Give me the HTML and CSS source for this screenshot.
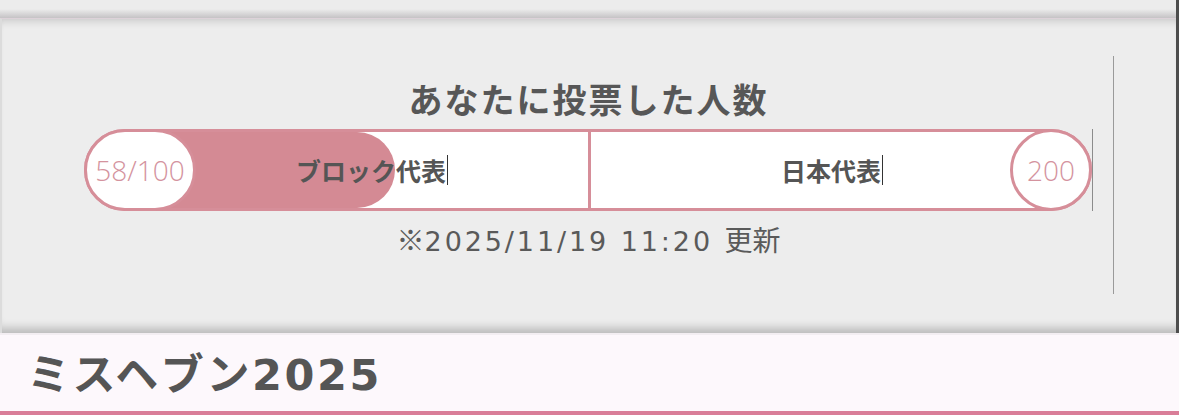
FILE: index.html
```html
<!DOCTYPE html>
<html lang="ja">
<head>
  <meta charset="UTF-8" />
  <meta name="viewport" content="width=device-width, initial-scale=1.0"/>
  <title>ミスヘブン2025</title>
  <link rel="stylesheet" href="styles.css">
</head>
<body>

<div class="page">
  <!-- Header strip above the vote panel -->
  <div class="topbar"></div>

  <!-- Vote count panel -->
  <section class="panel">
    <div class="vote-box">
      <h2 class="vote-title">あなたに投票した人数</h2>
      <div class="bar-row">
        <div class="vote-bar">
          <div class="seg seg-block">
            <div class="fill" style="width: 61.5%"></div>
            <div class="count-pill">58/100</div>
            <span class="seg-label">ブロック代表</span>
          </div>
          <div class="seg seg-japan">
            <span class="seg-label">日本代表</span>
            <div class="count-circle">200</div>
          </div>
        </div>
      </div>
      <p class="updated"><span class="note-mark">※</span>2025/11/19 11:20 <span class="note-jp">更新</span></p>
    </div>
  </section>
</div>

<!-- Section heading -->
<section class="heading-bar">
  <h1>ミスヘブン2025</h1>
</section>

</body>
</html>
```

FILE: styles.css
```css
* { margin: 0; padding: 0; box-sizing: border-box; }
body {
  font-family: "Noto Sans CJK JP", "Noto Sans", sans-serif;
  background: #ececec;
  color: #555;
  width: 1179px;
  height: 415px;
  overflow: hidden;
}

.page {
  border-right: 3px solid #4d4d4d;
}

.topbar {
  height: 18px;
  background: linear-gradient(#ececec 50%, #c5c3c5);
}

.panel {
  height: 315px;
  background: #ededed;
  border-top: 1px solid #ddd2d9;
  border-left: 2px solid #dcdcdc;
  padding: 37px 62px 0 62px;
  box-shadow: inset 0 9px 8px -7px rgba(0,0,0,0.16),
              inset 0 -12px 10px -7px rgba(0,0,0,0.22);
}

.vote-box {
  height: 238px;
  border-right: 1px solid #9a9a9a;
  padding: 22px 20px 0 20px;
  text-align: center;
}

.vote-title {
  font-size: 34px;
  font-weight: 700;
  line-height: 41px;
  letter-spacing: 2px;
  color: #575757;
}

.bar-row {
  margin-top: 10px;
  border-right: 1px solid #8c8c8c;
}

.vote-bar {
  display: flex;
  height: 82px;
  border: 3px solid #d68e99;
  border-radius: 41px;
  background: #fff;
}

.seg {
  position: relative;
  display: flex;
  align-items: center;
}

.seg-block {
  width: 504px;
  border-right: 3px solid #d68e99;
}

.seg-japan {
  flex: 1;
}

.fill {
  position: absolute;
  top: 0;
  bottom: 0;
  left: 0;
  background: #d48a94;
  border-radius: 38px;
}

.count-pill, .count-circle {
  position: relative;
  z-index: 1;
  display: flex;
  align-items: center;
  justify-content: center;
  background: #fff;
  border: 3px solid #d68e99;
  color: #d4939e;
  font-family: "Open Sans", "Noto Sans", sans-serif;
  font-size: 28px;
  font-weight: 300;
  align-self: stretch;
}

.count-pill {
  width: 112px;
  margin: -3px 0 -3px -3px;
  border-radius: 41px;
}

.count-circle {
  width: 82px;
  margin: -3px -3px -3px auto;
  border-radius: 50%;
}

.seg-label {
  position: relative;
  z-index: 1;
  font-size: 25px;
  font-weight: 700;
  line-height: 30px;
  padding-right: 1px;
  border-right: 1px solid #333;
  color: #555;
}

.seg-block .seg-label { margin-left: 100px; }
.seg-japan .seg-label { margin-left: 190px; }

.updated {
  margin-top: 13px;
  font-family: "DejaVu Sans", "Noto Sans CJK JP", sans-serif;
  font-size: 27px;
  line-height: 31px;
  letter-spacing: 2.9px;
  color: #5a5a5a;
}

.note-mark, .note-jp {
  font-family: "Noto Sans CJK JP", sans-serif;
  font-size: 28px;
  letter-spacing: 0;
}

.heading-bar {
  height: 82px;
  background: #fdf8fc;
  border-top: 2px solid #f3eef2;
  border-bottom: 4px solid #d97d98;
  padding: 12px 0 0 27px;
}

.heading-bar h1 {
  font-family: "DejaVu Sans", "Noto Sans CJK JP", sans-serif;
  font-size: 43px;
  font-weight: 700;
  line-height: 56px;
  letter-spacing: 2.6px;
  color: #555;
}
```
